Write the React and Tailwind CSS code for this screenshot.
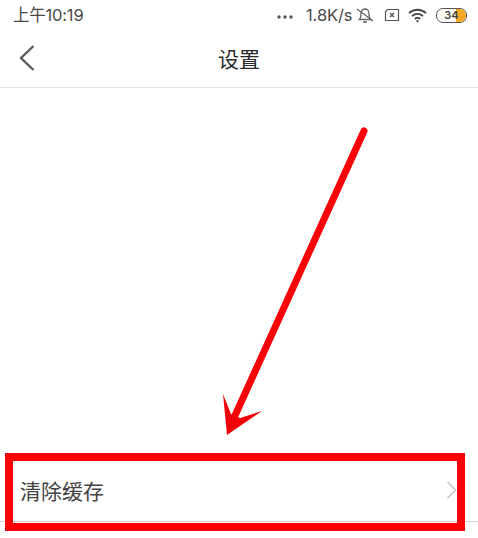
export default function App() {
  return (
    <div className="relative flex h-[538px] w-[478px] flex-col overflow-hidden bg-white font-['Liberation_Sans','Noto_Sans_CJK_SC',sans-serif]">
      {/* status bar */}
      <div className="flex h-[30px] shrink-0 items-center pl-[13px] text-[#4a4a4a]">
        <span className="w-[70px] whitespace-nowrap font-['Inter','Noto_Sans_CJK_SC',sans-serif] text-[16.5px] leading-none tracking-[-0.2px]">上午10:19</span>
        <div className="ml-[194px] flex items-center">
          <svg width="16" height="6" viewBox="0 0 16 6" className="mt-[3px]">
            <circle cx="2" cy="3" r="1.7" fill="#555" />
            <circle cx="8" cy="3" r="1.7" fill="#555" />
            <circle cx="14" cy="3" r="1.7" fill="#555" />
          </svg>
          <span className="ml-[13px] w-[47px] whitespace-nowrap font-['Inter',sans-serif] text-[16.5px] leading-none tracking-[-0.1px]">1.8K/s</span>
          <svg width="18" height="18" viewBox="0 0 18 18" className="ml-[3px]" fill="none" stroke="#666" strokeWidth="1.3">
            <path d="M3.500 13.500c1.500-1.500 1.500-3.500 1.500-6 0-2.600 1.800-4.500 4-4.500s4 1.900 4 4.500c0 2.500 0 4.500 1.500 6H3.500z" />
            <path d="M7 16h4" strokeWidth="1.600" />
            <path d="M1 3l16 12" />
          </svg>
          <svg width="16" height="14" viewBox="0 0 16 14" className="ml-[10px]" fill="none" stroke="#555" strokeWidth="1.2">
            <path d="M3.500 1.500h11v11H1.500V3.500z" />
            <path d="M6 5l4 4M10 5l-4 4" strokeWidth="1.400" />
          </svg>
          <svg width="19" height="15" viewBox="0 0 19 15" className="ml-[8px]" fill="none" stroke="#444" strokeWidth="1.800">
            <path d="M1 5.200c5-4.600 12-4.600 17 0" />
            <path d="M4 8.200c3.300-3 7.700-3 11 0" />
            <path d="M6.800 11c1.700-1.400 3.700-1.400 5.400 0" />
            <circle cx="9.500" cy="13.200" r="1.100" fill="#444" stroke="none" />
          </svg>
          <div className="relative ml-[9px] flex h-[15px] w-[31px] items-center justify-center overflow-hidden rounded-[7px] border border-[#555] bg-[#fffdf5]">
            <div className="absolute inset-y-0 right-0 w-[10px] rounded-r-[6px] bg-[#f5a623]" />
            <span className="relative font-['Inter',sans-serif] text-[11px] font-semibold leading-none text-[#444]">34</span>
          </div>
        </div>
      </div>

      {/* header */}
      <div className="relative flex h-[58px] shrink-0 items-center justify-center border-b border-[#e2e2e2]">
        <svg width="18" height="28" viewBox="0 0 18 28" className="absolute left-[18px] top-[14px]" fill="none" stroke="#5a5a5a" strokeWidth="2.400">
          <path d="M15.500 2L3 14l12.500 12" />
        </svg>
        <span className="font-['Noto_Sans_CJK_SC',sans-serif] text-[21px] leading-none text-[#2a2a2a]">设置</span>
      </div>

      {/* row */}
      <div className="mb-[16px] mt-auto flex h-[60px] shrink-0 items-center border-b border-[#d4d4d4] pb-[3px] pl-[20px] pr-[21px]">
        <span className="font-['Noto_Sans_CJK_SC',sans-serif] text-[21px] leading-none text-[#444444]">清除缓存</span>
        <svg width="11" height="18" viewBox="0 0 11 18" className="ml-auto" fill="none" stroke="#c4c4c4" strokeWidth="1.500">
          <path d="M1.500 1l8 8-8 8" />
        </svg>
      </div>

      {/* annotation overlay */}
      <div className="pointer-events-none absolute left-[5px] top-[453px] h-[78px] w-[460px] border-[8px] border-[#fb0007]" />
      <svg width="478" height="538" viewBox="0 0 478 538" className="pointer-events-none absolute left-0 top-0">
        <path d="M364 131L233 420" stroke="#fb0007" strokeWidth="7" strokeLinecap="round" fill="none" />
        <path d="M227 435L223 394L231 414L240 418L262 411Z" fill="#f20009" />
      </svg>
    </div>
  );
}
